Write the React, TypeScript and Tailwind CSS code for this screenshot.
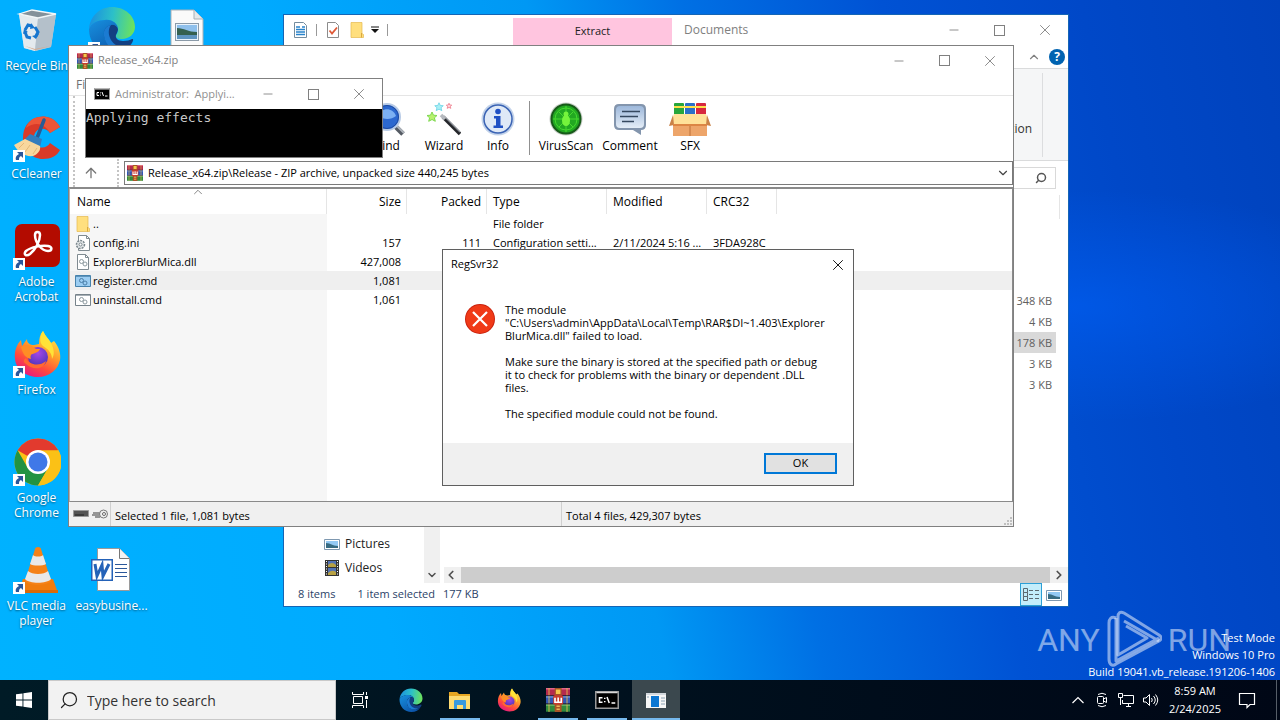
import React from 'react';
import { Minus, X, ChevronDown, ChevronLeft, ChevronRight, ChevronUp, ArrowUp, Search } from 'lucide-react';

type IconProps = { className?: string };

function WinRarIcon({ className = 'size-4' }: IconProps) {
  return (
    <svg viewBox="0 0 16 16" className={`shrink-0 ${className}`} aria-hidden="true">
      <rect x="0" y="0" width="16" height="5" fill="#b52a4e" />
      <rect x="0" y="0" width="16" height="1" fill="#e0668a" />
      <rect x="0" y="5.4" width="16" height="5" fill="#3156b4" />
      <rect x="0" y="5.4" width="16" height="1" fill="#7096dc" />
      <rect x="0" y="10.8" width="16" height="5" fill="#2f8a3e" />
      <rect x="0" y="10.8" width="16" height="1" fill="#72c070" />
      <path d="M2 0v16M14 0v16" stroke="#e2bb4e" strokeWidth=".6" />
      <path d="M0 5.1h16M0 10.6h16" stroke="#322538" strokeWidth=".6" />
      <rect x="5.8" y="0" width="4.6" height="16" fill="#a85325" />
      <path d="M6.6 1h3v3h-3z" fill="#f7c54c" />
      <rect x="4.8" y="4.8" width="6.6" height="6.2" rx="1" fill="#c83c2e" />
      <path d="M6 6.5v3h4.2v-3M8.1 6.3v3" fill="none" stroke="#fff" strokeWidth="1.1" />
      <path d="M7 12.2h2.2M7 14.2h2.2" stroke="#eab65b" strokeWidth="1" />
    </svg>
  );
}

function EdgeIcon({ className = 'size-12' }: IconProps) {
  return (
    <svg viewBox="0 0 48 48" className={className} aria-hidden="true">
      <defs>
        <linearGradient id="edgeTop" x1="0" y1=".4" x2="1" y2=".5">
          <stop offset="0" stopColor="#1a8fe0" />
          <stop offset=".5" stopColor="#2cc0c8" />
          <stop offset="1" stopColor="#6ee35a" />
        </linearGradient>
        <linearGradient id="edgeBody" x1="0" y1="0" x2=".8" y2="1">
          <stop offset="0" stopColor="#1791df" />
          <stop offset="1" stopColor="#0b4fa5" />
        </linearGradient>
      </defs>
      <path d="M1 23C2 10 12 1 24 1c13 0 23 9 23 20 0 7-6 12-13 12-5 0-7-2-6-4 2-2 2-4 2-6-1-6-6-9-11-9C10 14 3 17 1 23z" fill="url(#edgeTop)" />
      <path d="M1 23c2-6 9-9 16-9 7-1 13 4 13 9-1-3-4-5-7-4-5 1-8 5-7 11 1 9 8 13 17 13 5 0 9-2 11-5-4 6-11 10-19 10C11 48 1 37 1 23z" fill="url(#edgeBody)" />
      <path d="M16 30c-1-6 2-10 7-11 3-1 6 1 7 4 0 2-1 4-2 6-1 3 2 6 7 6 4 0 7-1 9-2 2 0 1 2 0 4-3 5-8 7-13 6-8 0-14-5-15-13z" fill="#123f82" />
      <path d="M16 30c-1-6 2-10 7-11-3 4-3 10 0 15s9 8 15 7c-3 2-6 2-9 2-8-1-12-6-13-13z" fill="#1b7bd2" />
    </svg>
  );
}

function FirefoxIcon({ className = 'size-12' }: IconProps) {
  return (
    <svg viewBox="0 0 48 48" className={className} aria-hidden="true">
      <defs>
        <linearGradient id="foxFlame" x1=".8" y1="0" x2=".25" y2="1">
          <stop offset="0" stopColor="#fff14a" />
          <stop offset=".4" stopColor="#ffa02a" />
          <stop offset=".7" stopColor="#ff4b3c" />
          <stop offset="1" stopColor="#e31587" />
        </linearGradient>
        <radialGradient id="foxGlobe" cx=".5" cy=".3" r=".7">
          <stop offset="0" stopColor="#a546e8" />
          <stop offset="1" stopColor="#4b35b8" />
        </radialGradient>
      </defs>
      <path d="M30 1c2 5 6 8 8 12l3-2c5 6 7 13 6 19-2 10-11 17-22 17S3 40 2 29c-1-8 2-15 6-19l1 6 5-7c0 4 3 6 7 6l5-1c0-5 1-10 4-13z" fill="url(#foxFlame)" />
      <circle cx="25" cy="27" r="10" fill="url(#foxGlobe)" />
      <path d="M8 17c5-3 11-2 15 2h4c-1 3-5 4-7 5-2 0-3 2-2 5-5-1-8-4-10-12z" fill="#ff8d25" />
      <path d="M30 1c2 5 6 8 8 12 3 6 4 11 1 16 0-6-4-10-9-13-4-4-3-10 0-15z" fill="#ffe338" />
      <path d="M13 28c3 7 13 9 20 3-2 8-12 10-20 3-3-2-3-4 0-6z" fill="#ff6a30" />
    </svg>
  );
}

function RecycleBinIcon() {
  return (
    <svg viewBox="0 0 48 48" className="size-12" aria-hidden="true">
      <path d="m6 8 13-4 24 4-5 33-16 4-11-3z" fill="#c9d2d9" />
      <path d="m6 8 19 4-3 33-11-3z" fill="#e4eaee" />
      <path d="m25 12 18-4-5 33-16 4z" fill="#b4c0ca" />
      <path d="m6 8 13-4 24 4-18 4z" fill="#84919a" />
      <path d="m6 8 13-4 24 4-18 4z" fill="none" stroke="#f2f6f8" strokeWidth="1.3" />
      <path d="m12 40 10 3 15-3-15 4z" fill="#d6a98a" />
      <g fill="none" stroke="#1676cf" strokeWidth="3">
        <path d="m12 24 3-5 4 1" />
        <path d="m22 21 3 5-2 4" />
        <path d="m18 32-4-1-2-5" />
      </g>
      <path d="m18 17 4 5-5 1zM26 28l-3 5-4-3zM10 28l1-5 4 3z" fill="#1676cf" />
    </svg>
  );
}

function ImageFileIcon() {
  return (
    <svg viewBox="0 0 48 48" className="size-12" aria-hidden="true">
      <path d="M8 4h23l9 9v34H8z" fill="#fafafa" stroke="#a8b0b6" />
      <path d="M31 4v9h9" fill="#e4e8ea" stroke="#a8b0b6" />
      <rect x="12.500" y="17.500" width="23" height="17" fill="#e9f3fc" stroke="#8b9aa8" />
      <path d="M14 19h20v8H14z" fill="#8fc0ec" />
      <path d="M14 22c7 0 11 4 20 4v4H14z" fill="#35604f" />
      <path d="M14 29h20v4H14z" fill="#5e94c0" />
    </svg>
  );
}

function CCleanerIcon() {
  return (
    <svg viewBox="0 0 48 48" className="size-12" aria-hidden="true">
      <path d="M47 13C42 4 33 1 26 3 15 5 10 14 10 24c0 12 9 21 20 21 8 0 14-3 17-9l-10-7c-4 7-15 6-16-4-1-10 10-14 16-6z" fill="#d93a28" />
      <path d="M47 13C42 4 33 1 26 3c-7 1-11 5-13 11 8-6 18-6 24 5z" fill="#ec5638" />
      <path d="m31 6-7 18" stroke="#285c96" strokeWidth="3.500" strokeLinecap="round" />
      <path d="m17 20 12 5-2 8-16-7z" fill="#347dbd" />
      <path d="M12 25 1 31c4 7 11 12 19 11 5-2 8-6 7-10z" fill="#f8d79d" />
      <path d="m11 29-5 5m11-3-5 7m12-4-4 6" stroke="#e3b878" />
    </svg>
  );
}

function AcrobatIcon() {
  return (
    <svg viewBox="0 0 48 48" className="size-12" aria-hidden="true">
      <rect x="2" y="2" width="45" height="43" rx="7" fill="#b30b00" />
      <path
        d="M22 13c0-4 5-4 5 0 0 7-5 15-10 19-4 3-7 0-4-3 5-4 16-6 22-5 5 1 4 5 0 5-6 0-13-8-13-16z"
        fill="none"
        stroke="#fff"
        strokeWidth="2.500"
      />
    </svg>
  );
}

function ChromeIcon() {
  return (
    <svg viewBox="0 0 48 48" className="size-12" aria-hidden="true">
      <circle cx="25" cy="24" r="23.500" fill="#fbc116" />
      <path d="M25 24 4.600 12.300A23.500 23.500 0 0 1 45.400 12.300z" fill="#e23a2e" />
      <path d="M4.600 12.300A23.500 23.500 0 0 0 25 47.500L35.200 29.900 25 24 14.800 29.900z" fill="#229342" />
      <path d="M45.400 12.300H25L35.200 29.900 25 47.500a23.500 23.500 0 0 0 20.400-35.200z" fill="#fbc116" />
      <circle cx="25" cy="24" r="12" fill="#fff" />
      <circle cx="25" cy="24" r="9.500" fill="#3f78e8" />
    </svg>
  );
}

function VlcIcon() {
  return (
    <svg viewBox="0 0 48 48" className="size-12" aria-hidden="true">
      <path d="M10 33h30l5 14H5z" fill="#f07c0e" />
      <path d="M5 44h40v3H5z" fill="#d96a08" />
      <path d="M25 1c2 0 3 1 3 2l10 32c-3 5-23 5-26 0L22 3c0-1 1-2 3-2z" fill="#f58218" />
      <path d="m20 9-3 9c3 2 13 2 16 0l-3-9c-2 2-8 2-10 0zM15 25l-3 8c4 5 22 5 26 0l-3-8c-4 4-16 4-20 0z" fill="#e9e9e9" />
    </svg>
  );
}

function WordFileIcon() {
  return (
    <svg viewBox="0 0 48 48" className="size-12" aria-hidden="true">
      <path d="M9.500 2.500h22l10 10v32h-32z" fill="#fff" stroke="#9a9a9a" />
      <path d="M31.500 2.500v10h10" fill="#f3f3f3" stroke="#777" />
      <path d="M27 18.500h12m-12 4h12m-12 4h12m-12 4h12" stroke="#2b579a" />
      <path d="M3 13h22v22H3z" fill="#2462b8" />
      <path d="M4.500 14.500h19v19h-19z" fill="#fff" />
      <path d="m7 18 2 12 5-11 1 11 6-12" fill="none" stroke="#2462b8" strokeWidth="3" />
    </svg>
  );
}

function ShortcutArrow() {
  return (
    <svg viewBox="0 0 12 12" className="absolute bottom-0 left-0 size-3" aria-hidden="true">
      <path d="M0 0h12v12H0z" fill="#fff" />
      <path d="M4 2h6v6L8 6c-2 1-2 2-2 4H3c-1-3 1-5 3-6z" fill="#2b579a" />
    </svg>
  );
}

function FolderIcon({ className = 'size-4' }: IconProps) {
  return (
    <svg viewBox="0 0 16 16" className={className} aria-hidden="true">
      <path d="M2 .5h11v11l1.500 1v3H2z" fill="#ffdf7e" stroke="#e5b94f" strokeWidth=".7" />
      <path d="M12.500 11v4.500" stroke="#dba83d" />
    </svg>
  );
}

function GearFileIcon({ wide, selected }: { wide?: boolean; selected?: boolean }) {
  return (
    <svg viewBox="0 0 16 16" className="size-4" aria-hidden="true">
      {wide ? (
        <>
          <path d="M.5 2.500h15v11H.5z" fill={selected ? '#9bcdf2' : '#fff'} stroke={selected ? '#4682ac' : '#77838b'} />
          <path d="M1 3.500h14" stroke={selected ? '#5e94bc' : '#a6afb5'} />
        </>
      ) : (
        <>
          <path d="M2.500.5h8l3 3v12h-11z" fill="#fff" stroke="#7f8a91" />
          <path d="M10.500.5v3h3" fill="none" stroke="#7f8a91" />
        </>
      )}
      <g fill="none" stroke={selected ? '#4a7ea8' : '#8c999f'}>
        <circle cx="6.500" cy="7.500" r="2" />
        <circle cx="10" cy="10" r="2" />
      </g>
    </svg>
  );
}

function IniIcon() {
  return (
    <svg viewBox="0 0 16 16" className="size-4" aria-hidden="true">
      <path d="M3.500.5h8l3 3v12h-11z" fill="#fff" stroke="#7f8a91" />
      <path d="M11.500.5v3h3" fill="none" stroke="#7f8a91" />
      <circle cx="5.500" cy="9.500" r="4" fill="#e3e7e9" stroke="#7b878d" strokeWidth="1.500" strokeDasharray="2 1" />
      <circle cx="5.500" cy="9.500" r="1.500" fill="#fff" stroke="#7b878d" />
    </svg>
  );
}

function FindIcon() {
  return (
    <svg viewBox="0 0 34 34" className="size-[34px]" aria-hidden="true">
      <path d="m23 23 9 9" stroke="#555b63" strokeWidth="5" />
      <path d="m24 22 9 9" stroke="#aeb4bb" strokeWidth="2" />
      <circle cx="16" cy="15" r="13" fill="#2c68cf" stroke="#b8cbe6" strokeWidth="2" />
      <circle cx="16" cy="15" r="11.500" fill="none" stroke="#1e4aa0" />
      <path d="M7 14c3-9 15-9 18 0-5 4-12 4-18 0z" fill="#7cb0f2" />
    </svg>
  );
}

function WizardIcon() {
  const star = 'm0-5 1.500 3.200 3.500.3-2.600 2.300.9 3.500L0 2.500l-3.300 1.800.9-3.500L-5-1.500l3.500-.3z';
  return (
    <svg viewBox="0 0 34 34" className="size-[34px]" aria-hidden="true">
      <path d="m16 15 17 17" stroke="#24262a" strokeWidth="3.500" />
      <path d="m17 14 16 16" stroke="#8d9299" strokeWidth="1.200" />
      <path d="m14 13 4 4" stroke="#b5b9be" strokeWidth="3.500" />
      <path d={star} transform="translate(5 15)" fill="#b8f26e" stroke="#7ed850" />
      <path d={star} transform="translate(12 5) scale(.85)" fill="#a8f0f6" stroke="#6fd4e6" />
      <path d={star} transform="translate(22 4) scale(.55)" fill="#ffd6dc" stroke="#ed7c8c" strokeWidth="1.500" />
    </svg>
  );
}

function InfoIcon() {
  return (
    <svg viewBox="0 0 34 34" className="size-[34px]" aria-hidden="true">
      <circle cx="17" cy="17" r="16.500" fill="#c3d3ea" />
      <circle cx="17" cy="17" r="14" fill="#dfe9f7" stroke="#3a63b4" strokeWidth="1.500" />
      <circle cx="17" cy="9.500" r="2.800" fill="#1f50c4" />
      <path d="M13 14h6.500v9.500H22V26H12.500v-2.500H15V16.500h-2z" fill="#1f50c4" />
    </svg>
  );
}

function VirusScanIcon() {
  return (
    <svg viewBox="0 0 34 34" className="size-[34px]" aria-hidden="true">
      <circle cx="17" cy="17" r="16.500" fill="#c8cdc8" />
      <circle cx="17" cy="17" r="14.500" fill="#22a822" stroke="#175a19" strokeWidth="2" />
      <g fill="none" stroke="#46d82f" strokeWidth="1">
        <circle cx="17" cy="17" r="11" />
        <path d="M17 4v26M4 17h26M10 10l4 4m10-4-4 4M10 25l4-4m10 4-4-4" />
      </g>
      <ellipse cx="17" cy="18.500" rx="4" ry="5.500" fill="#75f43c" />
      <circle cx="17" cy="12" r="2.500" fill="#75f43c" />
    </svg>
  );
}

function CommentIcon() {
  return (
    <svg viewBox="0 0 34 34" className="size-[34px]" aria-hidden="true">
      <defs>
        <linearGradient id="bubble" x1="0" y1="0" x2="0" y2="1">
          <stop offset="0" stopColor="#9db8db" />
          <stop offset="1" stopColor="#e4edf7" />
        </linearGradient>
      </defs>
      <path d="M6 2h22q5 0 5 5v16q0 5-5 5v5l-8-5H6q-5 0-5-5V7q0-5 5-5z" fill="#8395ad" />
      <path d="M7 4h20q4 0 4 4v14q0 4-4 4H7q-4 0-4-4V8q0-4 4-4z" fill="url(#bubble)" />
      <path d="M9 9.500h18M7 14.500h18M9 19.500h12" stroke="#35485f" strokeWidth="1.500" />
    </svg>
  );
}

function SfxIcon() {
  return (
    <svg viewBox="0 0 42 34" className="h-[34px] w-[42px]" aria-hidden="true">
      <rect x="5" y="1" width="10" height="13" rx="1" fill="#28a63c" />
      <rect x="16" y="1" width="10" height="13" rx="1" fill="#2b70c8" />
      <rect x="27" y="1" width="10" height="13" rx="1" fill="#d7283f" />
      <path d="M5 5h32" stroke="#ffe04a" strokeWidth="2" />
      <path d="M4 18h34v16H4z" fill="#eda56a" />
      <path d="M5 12h32l3 10H2z" fill="#ffe199" />
      <path d="M4 13 0 24l5-1zM38 13l4 11-5-1z" fill="#c98248" />
      <path d="M4 22h34v2H4z" fill="#dc8544" />
      <path d="M21 24v10" stroke="#bd7138" />
    </svg>
  );
}

function CmdIcon({ className = 'size-4' }: IconProps) {
  return (
    <svg viewBox="0 0 16 16" className={`shrink-0 ${className}`} aria-hidden="true">
      <path d="M.5 2.500h15v11H.5z" fill="#000" stroke="#9a9a9a" />
      <path d="M1 3h14" stroke="#d8d8d8" />
      <path d="M5 6.500H3v3h2M6.500 6.500v.8m0 1.400v.8M8 6l1.500 4M11 10h2.500" fill="none" stroke="#fff" />
    </svg>
  );
}

function PictureIcon() {
  return (
    <svg viewBox="0 0 16 16" className="size-4" aria-hidden="true">
      <path d="M.5 3.500h15v10H.5z" fill="#fff" stroke="#7e98b0" />
      <path d="M2 5h12v7H2z" fill="#93c9f4" />
      <path d="M2 7c5 0 6 3 12 3v2H2z" fill="#376b82" />
    </svg>
  );
}

function VideoIcon() {
  return (
    <svg viewBox="0 0 16 16" className="size-4" aria-hidden="true">
      <path d="M1 0h14v16H1z" fill="#333" />
      <path d="M4 1h8v6H4zM4 8h8v7H4z" fill="#5272b5" />
      <path d="M4 5q4-4 8 0v2H4zM4 13q4-4 8-1v3H4z" fill="#b8a143" />
      <path d="M2.500 1v14M13.500 1v14" stroke="#fff" strokeDasharray="1 1.500" />
    </svg>
  );
}

function WindowControls() {
  return (
    <div className="ml-auto flex h-full shrink-0 text-[#808080]">
      <button aria-label="Minimize" className="flex w-[46px] items-center justify-center">
        <Minus className="size-3.5" strokeWidth={1.5} />
      </button>
      <button aria-label="Maximize" className="flex w-[45px] items-center justify-center">
        <span className="size-[11px] border border-current" />
      </button>
      <button aria-label="Close" className="flex w-[46px] items-center justify-center">
        <X className="size-[18px]" strokeWidth={1.2} />
      </button>
    </div>
  );
}

const desktopItems = [
  { name: 'Recycle Bin', icon: <RecycleBinIcon />, cell: 'col-start-1 row-start-1' },
  { name: '', icon: <EdgeIcon />, cell: 'col-start-2 row-start-1', shortcut: true },
  { name: '', icon: <ImageFileIcon />, cell: 'col-start-3 row-start-1' },
  { name: 'CCleaner', icon: <CCleanerIcon />, cell: 'col-start-1 row-start-2', shortcut: true },
  { name: 'Adobe Acrobat', icon: <AcrobatIcon />, cell: 'col-start-1 row-start-3', shortcut: true },
  { name: 'Firefox', icon: <FirefoxIcon />, cell: 'col-start-1 row-start-4', shortcut: true },
  { name: 'Google Chrome', icon: <ChromeIcon />, cell: 'col-start-1 row-start-5', shortcut: true },
  { name: 'VLC media player', icon: <VlcIcon />, cell: 'col-start-1 row-start-6', shortcut: true },
  { name: 'easybusine...', icon: <WordFileIcon />, cell: 'col-start-2 row-start-6' },
];

function DesktopIcons() {
  return (
    <div className="grid w-max grid-cols-[repeat(3,75px)] grid-rows-[repeat(6,108px)]">
      {desktopItems.map((item) => (
        <button key={item.cell} aria-label={item.name || 'Shortcut'} className={`flex flex-col items-center gap-1 pt-1.5 pr-0.5 ${item.cell}`}>
          <span className="relative">
            {item.icon}
            {item.shortcut && <ShortcutArrow />}
          </span>
          <span className="px-0.5 text-[12px] leading-[15px] text-white [text-shadow:0_1px_2px_rgba(0,0,0,0.5)]">{item.name}</span>
        </button>
      ))}
    </div>
  );
}

function ExplorerWindow() {
  const sizes = ['348 KB', '4 KB', '178 KB', '3 KB', '3 KB'];
  return (
    <section className="absolute top-[14px] left-[283px] flex h-[593px] w-[786px] flex-col border border-[#1565b5] bg-white">
      <header className="flex h-[30px] shrink-0 items-center">
        <div className="flex items-center gap-2 pl-2">
          <svg viewBox="0 0 16 16" className="size-4" aria-hidden="true">
            <path d="M2.500.5h9l3 3v12h-12z" fill="#fff" stroke="#748c9e" />
            <path d="M4 5h4M4 7.500h9M4 10h9M4 12.500h9M10 5h3" stroke="#2783cc" strokeWidth="1.300" />
          </svg>
          <span className="h-3 w-px bg-[#999999]" />
          <svg viewBox="0 0 16 16" className="size-4" aria-hidden="true">
            <path d="M2.500.5h8l3 3v12h-11z" fill="#fff" stroke="#8c8c8c" />
            <path d="m4.500 8.500 2.500 3 5-6" fill="none" stroke="#df5a38" strokeWidth="1.800" />
          </svg>
          <div className="flex items-center gap-1.5">
            <FolderIcon />
            <svg viewBox="0 0 8 8" className="size-2" aria-hidden="true">
              <path d="M0 1h8" stroke="#111" />
              <path d="M0 3h8L4 7z" fill="#111" />
            </svg>
          </div>
          <span className="h-3 w-px bg-[#999999]" />
        </div>
        <div className="ml-[125px] flex h-[27px] w-[159px] items-center justify-center self-end bg-[#ffc5df] text-[11px] text-[#222222]">Extract</div>
        <h2 className="pl-3 text-[12px] text-[#808080]">Documents</h2>
        <WindowControls />
      </header>
      <div className="flex h-6 shrink-0 items-center justify-end gap-2 border-b border-[#dadbdc] pr-[3px] text-[#808080]">
        <ChevronUp className="size-3.5" strokeWidth={2} />
        <button aria-label="Help" className="size-4 rounded-full bg-[#0063b1] text-[12px] leading-4 font-bold text-white">
          ?
        </button>
      </div>
      <div className="flex h-[92px] shrink-0 items-center justify-end border-b border-[#dadbdc] bg-[#f5f6f7] pr-[25px] text-[12px] text-[#333333]">
        <span className="pt-7 pr-2.5">tion</span>
        <span className="h-[84px] w-px bg-[#dcdddf]" />
      </div>
      <div className="flex h-[34px] shrink-0 items-center justify-end pr-3">
        <div className="flex h-[22px] w-[150px] items-center border border-[#d9d9d9] pr-2">
          <input aria-label="Search Documents" className="min-w-0 flex-1 outline-none" />
          <Search className="size-3 -scale-x-100 text-[#555555]" strokeWidth={3} />
        </div>
      </div>
      <div className="flex min-h-0 flex-1">
        <nav className="flex flex-1 flex-col justify-end pl-10 text-[12px] text-[#222222]">
          <a href="#pictures" className="flex h-6 items-center gap-[5px]"><PictureIcon />Pictures</a>
          <a href="#videos" className="mb-[3px] flex h-6 items-center gap-[5px]"><VideoIcon />Videos</a>
        </nav>
        <div className="flex w-4 items-end justify-center bg-[#f0f0f0] pb-0.5 text-[#505050]">
          <ChevronDown className="size-3" strokeWidth={3} />
        </div>
        <div className="ml-1 flex w-[624px] flex-col">
          <div className="mr-2 h-6 border-r border-[#e5e5e5]" />
          <ul className="mt-[71px] mr-3 text-right text-[11px] text-[#606060]">
            {sizes.map((size, index) => (
              <li key={index} className={`h-[21px] pr-1 leading-[21px] ${index === 2 ? 'bg-[#d9d9d9]' : ''}`}>{size}</li>
            ))}
          </ul>
          <div className="mt-auto flex h-4 items-center bg-[#f0f0f0] text-[#505050]">
            <ChevronLeft className="mr-[3px] size-3.5" strokeWidth={3} />
            <span className="h-full flex-1 bg-[#cdcdcd]" />
            <ChevronRight className="mx-0.5 size-3.5" strokeWidth={3} />
          </div>
        </div>
      </div>
      <footer className="flex h-[23px] shrink-0 items-center pl-3.5 text-[11px] text-[#2b4267]">
        <span>8 items</span>
        <span className="pl-[22px]">1 item selected</span>
        <span className="pl-2">177 KB</span>
        <button aria-label="Details" className="ml-auto flex h-[23px] w-[22px] items-center justify-center border border-[#2c9fd6] bg-[#c3edfb]">
          <svg viewBox="0 0 16 16" className="size-4" aria-hidden="true">
            <path d="M.5 1.500h4v4h-4zM.5 5.500h4v4h-4zM.5 9.500h4v4h-4zM6 3.500h4m2 0h4m-10 4h4m2 0h4m-10 4h4m2 0h4" fill="none" stroke="#5c6970" />
          </svg>
        </button>
        <button aria-label="Large icons" className="mr-1.5 ml-1 flex"><PictureIcon /></button>
      </footer>
    </section>
  );
}

const files = [
  { name: '..', icon: <FolderIcon />, size: '', packed: '', type: 'File folder', modified: '', crc: '' },
  { name: 'config.ini', icon: <IniIcon />, size: '157', packed: '111', type: 'Configuration setti...', modified: '2/11/2024 5:16 ...', crc: '3FDA928C' },
  { name: 'ExplorerBlurMica.dll', icon: <GearFileIcon />, size: '427,008', packed: '', type: '', modified: '', crc: '' },
  { name: 'register.cmd', icon: <GearFileIcon wide selected />, size: '1,081', packed: '', type: '', modified: '', crc: '', selected: true },
  { name: 'uninstall.cmd', icon: <GearFileIcon wide />, size: '1,061', packed: '', type: '', modified: '', crc: '' },
];

function FileTable() {
  const head = 'h-[25px] border-r border-[#e5e5e5] text-[12px] font-normal';
  return (
    <table className="h-full w-full table-fixed border-separate border-spacing-0 text-[11px] leading-4 whitespace-nowrap text-black">
      <colgroup>
        <col className="w-[257px]" />
        <col className="w-20" />
        <col className="w-20" />
        <col className="w-[120px]" />
        <col className="w-[100px]" />
        <col className="w-[70px]" />
        <col />
      </colgroup>
      <thead>
        <tr>
          <th className={`${head} relative pl-[7px] text-left`}>
            Name
            <ChevronUp className="absolute -top-1 left-1/2 size-3.5 -translate-x-1/2 text-[#777777]" strokeWidth={1.5} />
          </th>
          <th className={`${head} pr-[5px] text-right`}>Size</th>
          <th className={`${head} pr-[5px] text-right`}>Packed</th>
          <th className={`${head} pl-1.5 text-left`}>Type</th>
          <th className={`${head} pl-1.5 text-left`}>Modified</th>
          <th className={`${head} pl-1.5 text-left`}>CRC32</th>
          <th />
        </tr>
      </thead>
      <tbody>
        {files.map((file) => (
          <tr key={file.name} className={`h-[19px] ${file.selected ? 'bg-[#efefef]' : ''}`}>
            <td className={file.selected ? 'pl-[5px]' : 'bg-[#f6f6f6] pl-[5px]'}>
              <span className="flex items-center gap-0.5">{file.icon}{file.name}</span>
            </td>
            <td className="pr-1.5 text-right">{file.size}</td>
            <td className="pr-1.5 text-right">{file.packed}</td>
            <td className="pl-1.5">{file.type}</td>
            <td className="pl-1.5">{file.modified}</td>
            <td className="pl-1.5">{file.crc}</td>
            <td />
          </tr>
        ))}
        <tr>
          <td className="bg-[#f6f6f6]" />
          <td colSpan={6} />
        </tr>
      </tbody>
    </table>
  );
}

function ToolButton({ label, width, children }: { label: string; width: string; children: React.ReactNode }) {
  return (
    <button className={`flex flex-col items-center gap-0.5 text-[12px] leading-4 text-black ${width}`}>
      {children}
      {label}
    </button>
  );
}

function ArchiveWindow() {
  return (
    <section className="absolute top-[45px] left-[68px] flex h-[482px] w-[946px] flex-col border border-[#808080] bg-white">
      <header className="flex h-[29px] shrink-0 items-center gap-[5px] pl-2">
        <WinRarIcon />
        <h2 className="text-[11px] text-[#808080]">Release_x64.zip</h2>
        <WindowControls />
      </header>
      <div className="flex h-[21px] shrink-0 items-center border-b border-[#e5e5e5] pl-[7px] text-[12px] text-[#707070]">
        <button>File</button>
      </div>
      <div className="ml-1 flex h-[63px] shrink-0 items-center border-l-2 border-dotted border-[#c4c4c4] pl-[284px]">
        <ToolButton label="Find" width="w-[58px]"><FindIcon /></ToolButton>
        <ToolButton label="Wizard" width="w-[54px]"><WizardIcon /></ToolButton>
        <ToolButton label="Info" width="w-[54px]"><InfoIcon /></ToolButton>
        <span className="mx-1 h-[54px] w-px bg-[#909090]" />
        <ToolButton label="VirusScan" width="w-[64px]"><VirusScanIcon /></ToolButton>
        <ToolButton label="Comment" width="w-[64px]"><CommentIcon /></ToolButton>
        <ToolButton label="SFX" width="w-[56px]"><SfxIcon /></ToolButton>
      </div>
      <div className="flex h-[28px] shrink-0 items-center">
        <button aria-label="Up one level" className="ml-1 flex h-full w-[46px] items-center justify-center border-x-2 border-dotted border-[#c4c4c4] pr-2.5">
          <ArrowUp className="size-4 text-[#777777]" />
        </button>
        <label className="ml-[5px] flex h-6 flex-1 items-center gap-[5px] border border-[#7a7a7a] pl-0.5">
          <WinRarIcon />
          <select aria-label="Archive path" className="min-w-0 flex-1 appearance-none text-[11px] text-black outline-none">
            <option>Release_x64.zip\Release - ZIP archive, unpacked size 440,245 bytes</option>
          </select>
          <ChevronDown className="mr-0.5 size-3.5 text-[#444444]" strokeWidth={2} />
        </label>
      </div>
      <div className="min-h-0 flex-1 border border-t-2 border-[#8a8a8a] border-l-[#b0b0b0]">
        <FileTable />
      </div>
      <footer className="flex h-6 shrink-0 items-center bg-[#f0f0f0] text-[11px] text-black">
        <div className="flex h-full w-[42px] items-center gap-[3px] border-r border-[#d0d0d0] pl-1">
          <svg viewBox="0 0 16 8" className="h-2 w-4" aria-hidden="true">
            <path d="M.5.5h15v6H.5z" fill="#535353" stroke="#999" />
            <path d="M2 5h9" stroke="#222" />
          </svg>
          <svg viewBox="0 0 16 10" className="h-2.5 w-4" aria-hidden="true">
            <path d="M1 4h7M0 6h8M3 8h5" stroke="#777" strokeWidth="1.500" />
            <circle cx="11.500" cy="5" r="4" fill="#eee" stroke="#777" />
            <circle cx="12" cy="5" r="1.500" fill="#fff" stroke="#666" />
          </svg>
        </div>
        <span className="w-[450px] pt-1 pl-1">Selected 1 file, 1,081 bytes</span>
        <span className="flex h-full flex-1 items-center border-l border-[#d0d0d0] pt-1 pl-1">Total 4 files, 429,307 bytes</span>
        <svg viewBox="0 0 10 10" className="size-2.5 self-end" aria-hidden="true">
          <path d="M7 1h2v2H7zM4 4h2v2H4zM7 4h2v2H7zM1 7h2v2H1zM4 7h2v2H4zM7 7h2v2H7z" fill="#bfbfbf" />
        </svg>
      </footer>
    </section>
  );
}

function ConsoleWindow() {
  return (
    <section className="absolute top-[78px] left-[85px] flex h-20 w-[298px] flex-col border border-[#808080] bg-white">
      <header className="flex h-[30px] shrink-0 items-center gap-[5px] pl-2">
        <CmdIcon />
        <h2 className="text-[11px] whitespace-pre text-[#909090]">{'Administrator:  Applyi...'}</h2>
        <WindowControls />
      </header>
      <pre className="flex-1 bg-black font-['DejaVu_Sans_Mono','Liberation_Mono',monospace] text-[13px] leading-[18px] text-[#c8c8c8]">Applying effects</pre>
    </section>
  );
}

function ErrorDialog() {
  return (
    <section role="dialog" aria-label="RegSvr32" className="absolute top-[249px] left-[442px] w-[412px] border border-[#5f5f5f] bg-white text-[11px] text-black">
      <header className="flex h-[29px] items-center pl-2">
        <h2>RegSvr32</h2>
        <button aria-label="Close" className="ml-auto flex h-full w-[30px] items-center justify-center">
          <X className="size-[18px]" strokeWidth={1.2} />
        </button>
      </header>
      <div className="flex h-[164px] gap-2.5 pt-6 pl-[22px]">
        <svg viewBox="0 0 30 30" className="mt-px size-[30px] shrink-0" aria-hidden="true">
          <circle cx="15" cy="15" r="15" fill="#c9210d" />
          <circle cx="15" cy="15" r="14" fill="#f03a17" />
          <path d="m8 8 14 14M22 8 8 22" stroke="#fff" strokeWidth="2.200" />
        </svg>
        <div className="flex flex-col gap-[13px] leading-[13px] whitespace-nowrap">
          <p>
            The module
            <br />
            "C:\Users\admin\AppData\Local\Temp\RAR$DI~1.403\Explorer
            <br />
            BlurMica.dll" failed to load.
          </p>
          <p>
            Make sure the binary is stored at the specified path or debug
            <br />
            it to check for problems with the binary or dependent .DLL
            <br />
            files.
          </p>
          <p>The specified module could not be found.</p>
        </div>
      </div>
      <footer className="flex h-[42px] items-center justify-end bg-[#f0f0f0] pr-4 pb-0.5">
        <button className="h-[21px] w-[73px] border-2 border-[#0078d7] bg-[#e1e1e1] leading-4">OK</button>
      </footer>
    </section>
  );
}

function Watermark() {
  return (
    <div className="absolute right-[5px] bottom-0 text-right text-[11px] leading-[17px] text-white">
      <div className="absolute right-11 bottom-2.5 flex items-center gap-1.5 font-['Roboto',sans-serif] text-[32px] leading-none text-white/50">
        <span>ANY</span>
        <svg viewBox="0 0 56 60" className="h-[60px] w-14" fill="none" stroke="currentColor" strokeWidth="3" strokeLinejoin="round" aria-hidden="true">
          <path d="M10 8C5 6 3 9 3 13v36c0 5 3 8 7 5l43-23c3-2 3-4 0-6L18 3c-4-2-6 0-6 4v38l29-17-21-12" />
          <path d="M10 8v43l43-23M18 11l35 20" />
        </svg>
        <span>RUN</span>
      </div>
      <p className="relative">Test Mode</p>
      <p className="relative">Windows 10 Pro</p>
      <p className="relative">Build 19041.vb_release.191206-1406</p>
    </div>
  );
}

function ExplorerTaskIcon() {
  return (
    <svg viewBox="0 0 24 24" className="size-6" aria-hidden="true">
      <path d="M1 4h8l2 2h11v3H1z" fill="#e7a723" />
      <path d="M1 8h21v13H1z" fill="#ffdc72" />
      <path d="M6 13q0-1 1-1h10q1 0 1 1v8h-3v-4H9v4H6z" fill="#3899df" />
    </svg>
  );
}

function DialogTaskIcon() {
  return (
    <svg viewBox="0 0 24 24" className="size-6" aria-hidden="true">
      <path d="M2 5h20v15H2z" fill="#f7f7f7" />
      <path d="M2 5h20v2H2z" fill="#d3d9de" />
      <path d="M7 8h8v11H7z" fill="#0b77d3" />
      <path d="M17 10h4m-4 3h4m-4 3h4M3 9h2" stroke="#8ca3b4" />
    </svg>
  );
}

const taskButtons = [
  { name: 'Microsoft Edge', icon: <EdgeIcon className="size-6" />, state: '' },
  { name: 'File Explorer', icon: <ExplorerTaskIcon />, state: 'open' },
  { name: 'Firefox', icon: <FirefoxIcon className="size-6" />, state: '' },
  { name: 'WinRAR', icon: <WinRarIcon className="size-6" />, state: 'open' },
  { name: 'Command Prompt', icon: <CmdIcon className="size-6" />, state: 'open' },
  { name: 'RegSvr32', icon: <DialogTaskIcon />, state: 'active' },
];

function Taskbar() {
  return (
    <footer className="flex h-10 shrink-0 items-stretch bg-gradient-to-r from-[#001b26] to-[#000716] text-white">
      <button aria-label="Start" className="flex w-12 items-center justify-center">
        <svg viewBox="0 0 16 16" className="size-4" fill="#fff" aria-hidden="true">
          <path d="m0 2.300 6.500-.9v6.200H0zM7.400 1.200 16 0v7.600H7.400zM0 8.400h6.500v6.200L0 13.700zM7.400 8.400H16V16l-8.600-1.200z" />
        </svg>
      </button>
      <label className="flex w-72 items-center gap-2 border border-[#c9c9c9] bg-[#f2f2f2] pl-2.5 text-[#222222]">
        <Search className="size-5 -scale-x-100" strokeWidth={1.5} />
        <input type="text" aria-label="Search" placeholder="Type here to search" className="min-w-0 flex-1 bg-transparent text-[14px] outline-none placeholder:text-[#333333]" />
      </label>
      <button aria-label="Task View" className="mr-[3px] flex w-12 items-center justify-center">
        <svg viewBox="0 0 18 18" className="size-[18px]" fill="none" stroke="#fff" aria-hidden="true">
          <path d="M2.500 5.500h9v7h-9zM1.500 1v2.500h11V1M1.500 17v-2.500h11V17M15.500 1v3m0 5v8" />
          <path d="M14 5h3v3h-3z" fill="#fff" stroke="none" />
        </svg>
      </button>
      <div className="flex gap-px">
        {taskButtons.map((task) => (
          <button
            key={task.name}
            aria-label={task.name}
            className={`relative flex w-12 items-center justify-center ${task.state === 'active' ? 'bg-[#3b484e]' : ''}`}
          >
            {task.icon}
            {task.state === 'open' && <span className="absolute inset-x-1 bottom-0 h-0.5 bg-[#76b9ed]" />}
            {task.state === 'active' && <span className="absolute inset-x-0 bottom-0 h-0.5 bg-[#76b9ed]" />}
          </button>
        ))}
      </div>
      <div className="ml-auto flex items-center pr-[3px]">
        <div className="flex items-center gap-2">
          <svg viewBox="0 0 16 16" className="size-4" fill="none" stroke="#fff" aria-hidden="true">
            <path d="m2.500 11 5.500-5.500 5.500 5.500" strokeWidth="1.200" />
          </svg>
          <svg viewBox="0 0 16 16" className="size-4" fill="none" stroke="#fff" aria-hidden="true">
            <rect x="3.500" y="4.500" width="6" height="7" rx="1" />
            <path d="m9.500 7 3-1.500v5l-3-1.500M4 2.500q4-2.500 8 0M4 13.500q4 2.500 8 0" />
          </svg>
          <svg viewBox="0 0 16 16" className="size-4" fill="none" stroke="#fff" aria-hidden="true">
            <path d="M5.500 3.500h10v8h-11V8M8 14.500h5M10.500 12v2.500M.5 1.500h4v4h-4zM2.500 6v7" />
          </svg>
          <svg viewBox="0 0 18 16" className="h-4 w-[18px]" fill="none" stroke="#fff" aria-hidden="true">
            <path d="M1.500 6v4h2.500l3.500 3.500v-11L4 6zM9.500 6q1.500 2 0 4M11.500 4q3.500 4 0 8M13.500 2.500q4.500 5.500 0 11" />
          </svg>
        </div>
        <div className="w-[70px] text-center text-[11px] leading-[18px]">
          <div>8:59 AM</div>
          <div>2/24/2025</div>
        </div>
        <button aria-label="Notifications" className="flex w-[34px] justify-center">
          <svg viewBox="0 0 18 18" className="size-[18px]" fill="none" stroke="#fff" strokeWidth="1.200" aria-hidden="true">
            <path d="M1.500 2.500h15v11H12l-3 3v-3H1.500z" />
          </svg>
        </button>
        <span className="ml-3 h-full w-px bg-[#565e68]" />
      </div>
    </footer>
  );
}

export default function App() {
  return (
    <div className="flex h-screen min-h-[720px] w-full flex-col overflow-hidden bg-[#00aaff] font-['Open_Sans','Noto_Sans',sans-serif] select-none">
      <main className="relative min-h-0 flex-1 overflow-hidden bg-[radial-gradient(ellipse_at_84%_45%,rgba(0,100,255,0.5)_0%,transparent_22%),linear-gradient(78deg,#00b2ff_0%,#00aaff_28%,#0098f4_47%,#0070e4_58%,#0052d4_72%,#0048c8_86%,#0042bc_100%)]">
        <DesktopIcons />
        <ExplorerWindow />
        <ArchiveWindow />
        <ConsoleWindow />
        <ErrorDialog />
        <Watermark />
      </main>
      <Taskbar />
    </div>
  );
}
